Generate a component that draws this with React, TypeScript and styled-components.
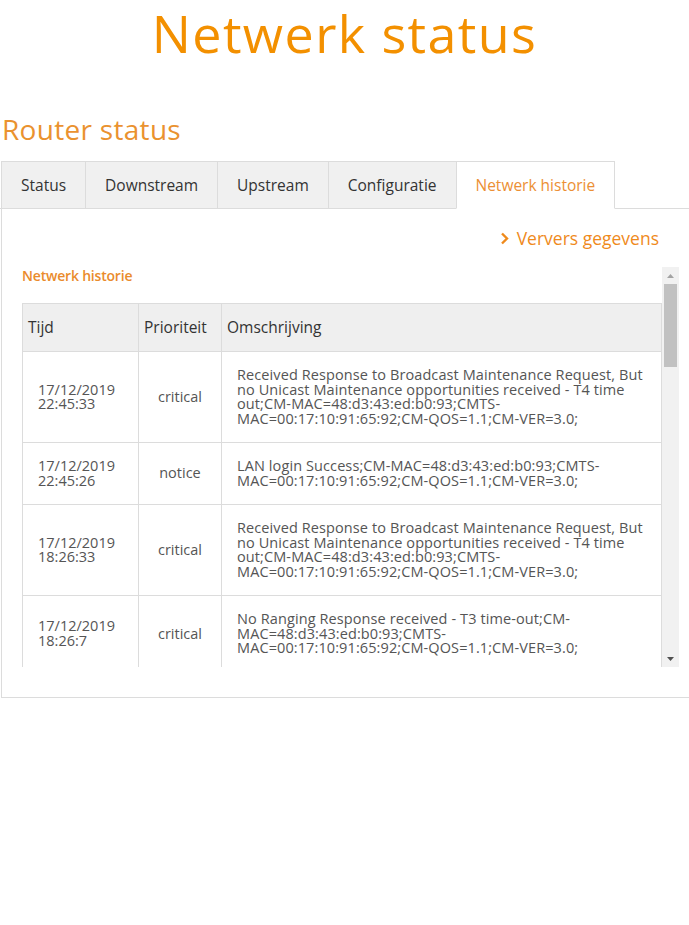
import { createGlobalStyle } from "styled-components";
import styled from "styled-components";

const GlobalStyle = createGlobalStyle`
  html, body {
    margin: 0;
    padding: 0;
    background: #fff;
    overflow-x: hidden;
  }
  body {
    font-family: "Open Sans", "Noto Sans", sans-serif;
    color: #333;
  }
`;

type LogRow = {
  date: string;
  time: string;
  priority: string;
  lines: string[];
};

const T4 = [
  "Received Response to Broadcast Maintenance Request, But",
  "no Unicast Maintenance opportunities received - T4 time",
  "out;CM-MAC=48:d3:43:ed:b0:93;CMTS-",
  "MAC=00:17:10:91:65:92;CM-QOS=1.1;CM-VER=3.0;",
];
const LOGIN = [
  "LAN login Success;CM-MAC=48:d3:43:ed:b0:93;CMTS-",
  "MAC=00:17:10:91:65:92;CM-QOS=1.1;CM-VER=3.0;",
];
const T3 = [
  "No Ranging Response received - T3 time-out;CM-",
  "MAC=48:d3:43:ed:b0:93;CMTS-",
  "MAC=00:17:10:91:65:92;CM-QOS=1.1;CM-VER=3.0;",
];

const rows: LogRow[] = [
  { date: "17/12/2019", time: "22:45:33", priority: "critical", lines: T4 },
  { date: "17/12/2019", time: "22:45:26", priority: "notice", lines: LOGIN },
  { date: "17/12/2019", time: "18:26:33", priority: "critical", lines: T4 },
  { date: "17/12/2019", time: "18:26:7", priority: "critical", lines: T3 },
  { date: "17/12/2019", time: "14:02:18", priority: "critical", lines: T4 },
  { date: "17/12/2019", time: "14:01:55", priority: "critical", lines: T3 },
  { date: "17/12/2019", time: "09:12:40", priority: "notice", lines: LOGIN },
  { date: "16/12/2019", time: "23:58:11", priority: "critical", lines: T4 },
  { date: "16/12/2019", time: "23:57:49", priority: "critical", lines: T3 },
  { date: "16/12/2019", time: "20:31:02", priority: "notice", lines: LOGIN },
  { date: "16/12/2019", time: "17:44:36", priority: "critical", lines: T4 },
  { date: "16/12/2019", time: "17:44:9", priority: "critical", lines: T3 },
  { date: "16/12/2019", time: "12:05:27", priority: "notice", lines: LOGIN },
  { date: "15/12/2019", time: "21:19:58", priority: "critical", lines: T4 },
  { date: "15/12/2019", time: "21:19:31", priority: "critical", lines: T3 },
  { date: "15/12/2019", time: "16:48:03", priority: "notice", lines: LOGIN },
  { date: "15/12/2019", time: "10:22:45", priority: "critical", lines: T4 },
  { date: "15/12/2019", time: "10:22:17", priority: "critical", lines: T3 },
  { date: "14/12/2019", time: "19:37:52", priority: "notice", lines: LOGIN },
  { date: "14/12/2019", time: "08:14:26", priority: "critical", lines: T4 },
  { date: "14/12/2019", time: "08:13:58", priority: "critical", lines: T3 },
  { date: "13/12/2019", time: "22:06:14", priority: "notice", lines: LOGIN },
];

const tabs = ["Status", "Downstream", "Upstream", "Configuratie", "Netwerk historie"];

const App = () => {
  const active = "Netwerk historie";

  return (
    <Page>
      <GlobalStyle />
      <Title>Netwerk status</Title>
      <SubTitle>Router status</SubTitle>
      <TabBar>
        {tabs.map((t) => (
          <Tab key={t} $active={t === active}>
            {t}
          </Tab>
        ))}
      </TabBar>
      <Panel>
        <RefreshRow>
          <RefreshLink>
            <svg width="9" height="13" viewBox="0 0 9 13">
              <polyline
                points="2,1.5 7,6.5 2,11.5"
                fill="none"
                stroke="#ef8a1c"
                strokeWidth="2.4"
              />
            </svg>
            Ververs gegevens
          </RefreshLink>
        </RefreshRow>
        <ScrollFrame>
          <ScrollContent>
            <SectionLabel>Netwerk historie</SectionLabel>
            <Table>
              <thead>
                <tr>
                  <HeadCell $w={116}>Tijd</HeadCell>
                  <HeadCell $w={83}>Prioriteit</HeadCell>
                  <HeadCell>Omschrijving</HeadCell>
                </tr>
              </thead>
              <tbody>
                {rows.map((r, i) => (
                  <tr key={i}>
                    <TimeCell>
                      {r.date}
                      <br />
                      {r.time}
                    </TimeCell>
                    <PrioCell>{r.priority}</PrioCell>
                    <DescCell>
                      {r.lines.map((l, j) => (
                        <DescLine key={j}>{l}</DescLine>
                      ))}
                    </DescCell>
                  </tr>
                ))}
              </tbody>
            </Table>
          </ScrollContent>
          <ScrollBar>
            <ScrollButton>
              <svg width="7" height="4" viewBox="0 0 7 4">
                <polygon points="0,4 3.5,0 7,4" fill="#a3a3a3" />
              </svg>
            </ScrollButton>
            <ScrollTrack>
              <ScrollThumb />
            </ScrollTrack>
            <ScrollButton>
              <svg width="7" height="4" viewBox="0 0 7 4">
                <polygon points="0,0 3.5,4 7,0" fill="#505050" />
              </svg>
            </ScrollButton>
          </ScrollBar>
        </ScrollFrame>
      </Panel>
    </Page>
  );
};

export default App;

const Page = styled.div`
  width: 689px;
  overflow: hidden;
  padding-bottom: 200px;
`;

const Title = styled.h1`
  margin: 0;
  text-align: center;
  font-size: 52px;
  font-weight: 400;
  line-height: 66px;
  color: #f39000;
  letter-spacing: 1.4px;
`;

const SubTitle = styled.h2`
  margin: 46px 0 0 2px;
  font-size: 28px;
  font-weight: 400;
  line-height: 34px;
  color: #ea922f;
  letter-spacing: 0.3px;
`;

const TabBar = styled.div`
  display: flex;
  margin-top: 15px;
  padding-left: 1px;
  border-bottom: 1px solid #dcdcdc;
`;

const Tab = styled.div<{ $active?: boolean }>`
  height: 46px;
  padding: 0 19px;
  display: flex;
  align-items: center;
  font-size: 15.5px;
  color: ${(p) => (p.$active ? "#ec8f34" : "#333")};
  background: ${(p) => (p.$active ? "#fff" : "#f0f0f0")};
  border: 1px solid #dcdcdc;
  border-right-width: 0;
  border-bottom-color: ${(p) => (p.$active ? "#fff" : "#dcdcdc")};
  margin-bottom: -1px;
  &:last-child {
    border-right-width: 1px;
  }
`;

const Panel = styled.div`
  width: 720px;
  margin-left: 1px;
  border-left: 1px solid #dcdcdc;
  border-bottom: 1px solid #dcdcdc;
  padding: 17px 0 30px 20px;
  box-sizing: border-box;
`;

const RefreshRow = styled.div`
  display: flex;
  justify-content: flex-end;
  width: 637px;
`;

const RefreshLink = styled.a`
  display: flex;
  align-items: center;
  gap: 8px;
  font-size: 17.5px;
  line-height: 24px;
  color: #ef8a1c;
  cursor: pointer;
`;

const ScrollFrame = styled.div`
  display: flex;
  width: 657px;
  height: 400px;
  margin-top: 17px;
`;

const ScrollContent = styled.div`
  flex: 1;
  min-width: 0;
  overflow-x: hidden;
  overflow-y: auto;
  scrollbar-width: none;
`;

const ScrollBar = styled.div`
  width: 17px;
  display: flex;
  flex-direction: column;
  background: #f1f1f1;
`;

const ScrollButton = styled.div`
  height: 17px;
  display: flex;
  align-items: center;
  justify-content: center;
`;

const ScrollTrack = styled.div`
  flex: 1;
  padding: 0 2px;
`;

const ScrollThumb = styled.div`
  height: 83px;
  background: #c1c1c1;
`;

const SectionLabel = styled.div`
  font-size: 14px;
  line-height: 14px;
  margin-top: 2px;
  color: #ea8b2c;
  font-weight: 600;
  letter-spacing: -0.2px;
`;

const Table = styled.table`
  width: 100%;
  margin-top: 20px;
  border-collapse: collapse;
  font-family: "Open Sans", "Noto Sans", sans-serif;
  color: #555;
  border: 1px solid #dcdcdc;
`;

const HeadCell = styled.th<{ $w?: number }>`
  box-sizing: border-box;
  width: ${(p) => (p.$w ? `${p.$w}px` : "auto")};
  text-align: left;
  font-weight: 400;
  font-size: 15.5px;
  line-height: 17px;
  color: #333;
  background: #efefef;
  padding: 15px 5px;
  border: 1px solid #dcdcdc;
`;

const BodyCell = styled.td`
  font-size: 14.5px;
  line-height: 14.5px;
  padding: 16px 15px;
  border: 1px solid #dcdcdc;
  vertical-align: middle;
`;

const TimeCell = styled(BodyCell)``;

const PrioCell = styled(BodyCell)`
  text-align: center;
  padding: 16px 5px;
`;

const DescCell = styled(BodyCell)`
  padding: 16px 10px 16px 15px;
`;

const DescLine = styled.div`
  white-space: nowrap;
  letter-spacing: 0.1px;
`;
